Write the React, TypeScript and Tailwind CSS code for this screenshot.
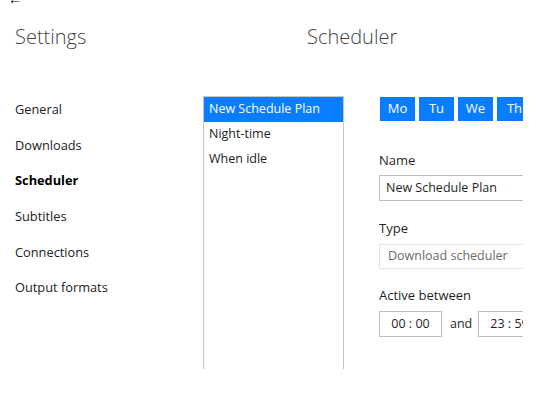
import React from 'react';

const navItems = ['General', 'Downloads', 'Scheduler', 'Subtitles', 'Connections', 'Output formats'];
const plans = ['New Schedule Plan', 'Night-time', 'When idle'];
const days = ['Mo', 'Tu', 'We', 'Th'];

export default function App() {
  return (
    <div
      className="w-[536px] h-[396px] bg-white overflow-hidden text-[#1f1f1f]"
      style={{ fontFamily: '"Open Sans", "Noto Sans", sans-serif' }}
    >
      {/* title bar, back arrow is cut off at the top */}
      <div className="h-[6px] overflow-hidden pl-[8px]">
        <div className="text-[14px] leading-[14px] -mt-[8px] text-black">←</div>
      </div>

      <div className="flex h-[62px] items-center">
        <h1 className="w-[307px] pl-[15px] text-[20px] font-light text-[#444]">Settings</h1>
        <h2 className="text-[20px] font-light text-[#444]">Scheduler</h2>
      </div>

      <div className="flex pt-[28px]">
        {/* sidebar */}
        <nav className="w-[203px] flex flex-col -mt-[4px]">
          {navItems.map((item) => (
            <div
              key={item}
              className={
                'h-[35.6px] flex items-center pl-[15px] text-[12.8px] ' +
                (item === 'Scheduler' ? 'font-bold text-black' : 'text-[#222]')
              }
            >
              {item}
            </div>
          ))}
        </nav>

        {/* plans list */}
        <div className="w-[141px] h-[273px] border-x border-t border-[#c8c8c8]">
          {plans.map((p, i) => (
            <div
              key={p}
              className={
                'h-[25px] flex items-center pl-[5px] text-[12.5px] ' +
                (i === 0 ? 'bg-[#0a7cff] text-white' : 'text-[#222]')
              }
            >
              {p}
            </div>
          ))}
        </div>

        {/* plan details */}
        <div className="ml-[35px] w-[144px] overflow-hidden">
          <div className="flex gap-[4px] pt-[1px] pl-[1px]">
            {days.map((d) => (
              <div
                key={d}
                className="shrink-0 w-[35px] h-[24px] bg-[#0a7cff] text-white text-[13px] flex items-center justify-center"
              >
                {d}
              </div>
            ))}
          </div>

          <div className="mt-[30px] text-[13px] leading-[18px]">Name</div>
          <div className="mt-[6px] h-[26px] w-[160px] border border-[#bdbdbd] flex items-center pl-[6px] text-[12.5px]">
            New Schedule Plan
          </div>

          <div className="mt-[18px] text-[13px] leading-[18px]">Type</div>
          <div className="mt-[7px] h-[25px] w-[160px] border border-[#e3e3e3] flex items-center pl-[8px] text-[12.5px] text-[#6a6a6a]">
            Download scheduler
          </div>

          <div className="mt-[17px] text-[13px] leading-[18px]">Active between</div>
          <div className="mt-[7px] flex items-center">
            <div className="shrink-0 w-[63px] h-[26px] border border-[#bdbdbd] flex items-center justify-center text-[12.5px]">
              00 : 00
            </div>
            <span className="shrink-0 ml-[8px] w-[28px] text-[12.5px]">and</span>
            <div className="shrink-0 w-[63px] h-[26px] border border-[#bdbdbd] flex items-center justify-center text-[12.5px]">
              23 : 59
            </div>
          </div>
        </div>
      </div>
    </div>
  );
}
